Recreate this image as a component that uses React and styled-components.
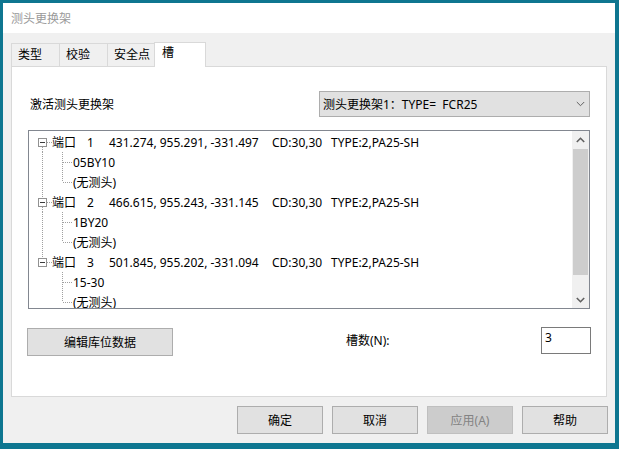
import React from 'react';
import styled, { createGlobalStyle } from 'styled-components';

const Global = createGlobalStyle`
  html, body { margin: 0; padding: 0; }
  body {
    width: 619px;
    height: 449px;
    overflow: hidden;
    background: #0e7690;
    font-family: "Noto Sans", "Noto Sans CJK SC", sans-serif;
    font-size: 12px;
    color: #000;
  }
`;

const Desktop = styled.div`
  padding: 3px 0 0 3px;
`;

const Window = styled.div`
  width: 612px;
  height: 440px;
  background: #f0f0f0;
  display: flex;
  flex-direction: column;
  box-sizing: border-box;
`;

const TitleBar = styled.div`
  height: 30px;
  background: #fff;
  display: flex;
  align-items: center;
  padding-left: 8px;
  color: #9a9a9a;
  font-size: 12px;
  flex-shrink: 0;
`;

const Body = styled.div`
  display: flex;
  flex-direction: column;
  padding: 9px 8px 0 8px;
`;

const TabStrip = styled.div`
  display: flex;
  align-items: flex-end;
  height: 24px;
`;

const Tab = styled.div`
  box-sizing: border-box;
  height: ${p => (p.$active ? 25 : 23)}px;
  width: ${p => (p.$active ? 52 : 49)}px;
  border: 1px solid #d9d9d9;
  border-bottom: 0;
  margin-right: -1px;
  margin-left: ${p => (p.$active ? -1 : 0)}px;
  margin-bottom: ${p => (p.$active ? -1 : 0)}px;
  padding: ${p => (p.$active ? '2px 0 0 7px' : '3px 0 0 6px')};
  line-height: 16px;
  background: ${p => (p.$active ? '#fff' : '#f0f0f0')};
  position: relative;
  z-index: ${p => (p.$active ? 2 : 1)};
  white-space: nowrap;
`;

const Panel = styled.div`
  box-sizing: border-box;
  height: 331px;
  background: #fff;
  border: 1px solid #d9d9d9;
  padding: 0 16px;
  display: flex;
  flex-direction: column;
`;

const TopRow = styled.div`
  margin-top: 24px;
  height: 26px;
  display: flex;
  align-items: center;
`;

const FieldLabel = styled.span`
  margin-left: ${p => p.$indent || 0}px;
  white-space: nowrap;
`;

const Combo = styled.div`
  box-sizing: border-box;
  margin-left: auto;
  width: 271px;
  height: 26px;
  border: 1px solid #adadad;
  background: #e1e1e1;
  display: flex;
  align-items: center;
  justify-content: space-between;
  padding: 0 4px 0 3px;
  white-space: nowrap;
`;

const Tree = styled.div`
  box-sizing: border-box;
  margin-top: 13px;
  height: 179px;
  border: 1px solid #828790;
  display: flex;
`;

const TreeBody = styled.div`
  flex: 1;
  overflow: hidden;
  padding: 1px 0 0 3px;
`;

const TreeRow = styled.div`
  height: 20px;
  display: flex;
  align-items: center;
  white-space: nowrap;
`;

const Cell = styled.span`
  display: inline-block;
  width: ${p => p.$w}px;
  flex-shrink: 0;
`;

const ItemText = styled.span`
  margin-left: 1px;
`;

const ScrollBar = styled.div`
  width: 17px;
  background: #f0f0f0;
  display: flex;
  flex-direction: column;
`;

const ScrollButton = styled.div`
  height: 17px;
  display: flex;
  align-items: center;
  justify-content: center;
`;

const ScrollTrack = styled.div`
  flex: 1;
  padding: 1px 1px 0 1px;
`;

const Thumb = styled.div`
  height: 126px;
  background: #cdcdcd;
`;

const BottomRow = styled.div`
  margin-top: 18px;
  display: flex;
  align-items: flex-start;
`;

const Button = styled.button`
  box-sizing: border-box;
  width: ${p => p.$w || 86}px;
  height: 28px;
  margin: ${p => p.$m || 0};
  padding: 0;
  font-family: inherit;
  font-size: 12px;
  color: ${p => (p.disabled ? '#838383' : '#000')};
  background: ${p => (p.disabled ? '#cccccc' : '#e1e1e1')};
  border: 1px solid ${p => (p.disabled ? '#bfbfbf' : '#adadad')};
  border-radius: 0;
  flex-shrink: 0;
`;

const CountLabel = styled.span`
  margin-left: 173px;
  line-height: 27px;
  white-space: nowrap;
`;

const Edit = styled.input`
  box-sizing: border-box;
  margin-left: auto;
  margin-right: -1px;
  width: 50px;
  height: 27px;
  border: 1px solid #7a7a7a;
  padding: 0 0 7px 3px;
  font-family: inherit;
  font-size: 12px;
  color: #000;
  background: #fff;
  outline: none;
`;

const Footer = styled.div`
  margin-top: 9px;
  margin-right: -1px;
  display: flex;
  justify-content: flex-end;
  gap: 9px;
`;

const DOT = { stroke: '#a0a0a0', strokeWidth: 1, strokeDasharray: '1 1' };

const Connector = ({ up, down, right, box }) => (
  <svg width="20" height="20" shapeRendering="crispEdges" style={{ flexShrink: 0, display: 'block' }}>
    {up && <line x1="10.5" y1="0" x2="10.5" y2={box ? 5 : 10} {...DOT} />}
    {down && <line x1="10.5" y1={box ? 15 : 10} x2="10.5" y2="20" {...DOT} />}
    {right && <line x1={box ? 15 : 11} y1="10.5" x2="20" y2="10.5" {...DOT} />}
    {box && (
      <>
        <rect x="6.5" y="6.5" width="8" height="8" fill="#fff" stroke="#919191" />
        <line x1="8" y1="10.5" x2="13" y2="10.5" stroke="#3c3c3c" />
      </>
    )}
  </svg>
);

const Chevron = ({ dir = 'down', color = '#606060', w = 1 }) => (
  <svg width="9" height="6" viewBox="0 0 9 6">
    <polyline
      points={dir === 'down' ? '0.8,1 4.5,4.7 8.2,1' : '0.8,5 4.5,1.3 8.2,5'}
      fill="none"
      stroke={color}
      strokeWidth={w}
    />
  </svg>
);

const ports = [
  { n: '1', c: '431.274, 955.291, -331.497', kids: ['05BY10', '(无测头)'] },
  { n: '2', c: '466.615, 955.243, -331.145', kids: ['1BY20', '(无测头)'] },
  { n: '3', c: '501.845, 955.202, -331.094', kids: ['15-30', '(无测头)'] },
];

export default function App() {
  return (
    <>
      <Global />
      <Desktop>
        <Window>
          <TitleBar>测头更换架</TitleBar>
          <Body>
            <TabStrip>
              <Tab>类型</Tab>
              <Tab>校验</Tab>
              <Tab>安全点</Tab>
              <Tab $active>槽</Tab>
            </TabStrip>
            <Panel>
              <TopRow>
                <FieldLabel $indent={2}>激活测头更换架</FieldLabel>
                <Combo>
                  <span>测头更换架1：TYPE=&nbsp; FCR25</span>
                  <Chevron />
                </Combo>
              </TopRow>
              <Tree>
                <TreeBody>
                  {ports.map((p, i) => {
                    const last = i === ports.length - 1;
                    return (
                      <React.Fragment key={p.n}>
                        <TreeRow>
                          <Connector box up={i > 0} down={!last} right />
                          <Cell $w={35}>端口</Cell>
                          <Cell $w={22}>{p.n}</Cell>
                          <Cell $w={163}>{p.c}</Cell>
                          <Cell $w={59}>CD:30,30</Cell>
                          <span>TYPE:2,PA25-SH</span>
                        </TreeRow>
                        {p.kids.map((k, j) => (
                          <TreeRow key={k + j}>
                            <Connector up={!last} down={!last} />
                            <Connector up down={j < p.kids.length - 1} right />
                            <ItemText>{k}</ItemText>
                          </TreeRow>
                        ))}
                      </React.Fragment>
                    );
                  })}
                </TreeBody>
                <ScrollBar>
                  <ScrollButton>
                    <Chevron dir="up" w={1.6} />
                  </ScrollButton>
                  <ScrollTrack>
                    <Thumb />
                  </ScrollTrack>
                  <ScrollButton>
                    <Chevron dir="down" w={1.6} />
                  </ScrollButton>
                </ScrollBar>
              </Tree>
              <BottomRow>
                <Button $w={146} $m="1px 0 0 -1px">编辑库位数据</Button>
                <CountLabel>槽数(N):</CountLabel>
                <Edit readOnly value="3" />
              </BottomRow>
            </Panel>
            <Footer>
              <Button>确定</Button>
              <Button>取消</Button>
              <Button disabled>应用(A)</Button>
              <Button>帮助</Button>
            </Footer>
          </Body>
        </Window>
      </Desktop>
    </>
  );
}
